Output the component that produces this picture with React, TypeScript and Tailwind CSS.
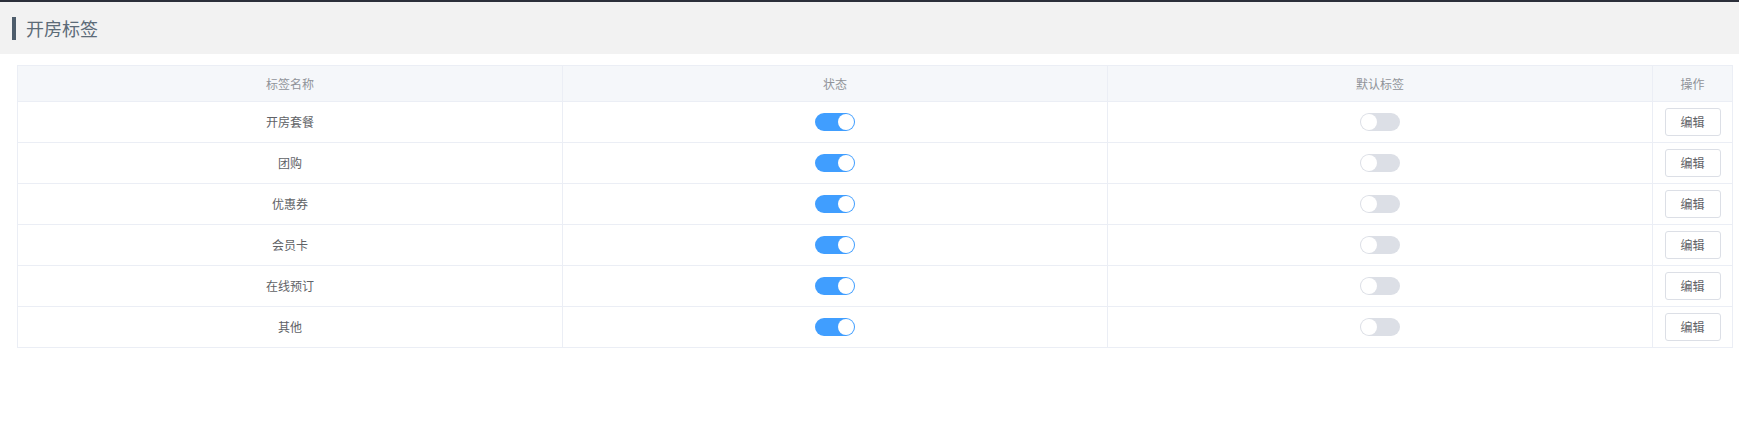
import React from "react";

const rows = ["开房套餐", "团购", "优惠券", "会员卡", "在线预订", "其他"];

function Toggle({ on }: { on: boolean }) {
  return (
    <div
      className={
        "relative w-[40px] h-[18px] rounded-full " +
        (on ? "bg-[#409eff]" : "bg-[#dcdfe6]")
      }
    >
      <div
        className={
          "absolute top-[1px] w-[16px] h-[16px] rounded-full bg-white " +
          (on ? "left-[23px]" : "left-[1px]")
        }
      />
    </div>
  );
}

export default function App() {
  const cell = "flex items-center justify-center border-r border-b border-[#ebeef5]";
  return (
    <div
      className="w-full min-h-[448px] bg-white"
      style={{ fontFamily: '"Noto Sans CJK SC", "Noto Sans", sans-serif' }}
    >
      <div className="h-[54px] bg-[#f2f2f2] border-t-2 border-[#2b2f3a] flex items-center pl-[12px]">
        <div className="w-[4px] h-[23px] bg-[#4e5d6c]" />
        <div className="ml-[10px] text-[18px] leading-none text-[#5c6b78]">开房标签</div>
      </div>
      <div className="ml-[17px] mr-[6px] mt-[11px] border-t border-l border-[#ebeef5] grid grid-cols-[1fr_1fr_1fr_80px] text-[12px]">
        {["标签名称", "状态", "默认标签", "操作"].map((h) => (
          <div key={h} className={cell + " h-[36px] bg-[#f5f7fa] text-[#909399]"}>
            {h}
          </div>
        ))}
        {rows.map((r) => (
          <React.Fragment key={r}>
            <div className={cell + " h-[41px] text-[#606266]"}>{r}</div>
            <div className={cell + " h-[41px]"}>
              <Toggle on />
            </div>
            <div className={cell + " h-[41px]"}>
              <Toggle on={false} />
            </div>
            <div className={cell + " h-[41px]"}>
              <button className="w-[56px] h-[28px] border border-[#dcdfe6] rounded-[3px] bg-white text-[12px] text-[#606266]">
                编辑
              </button>
            </div>
          </React.Fragment>
        ))}
      </div>
    </div>
  );
}
